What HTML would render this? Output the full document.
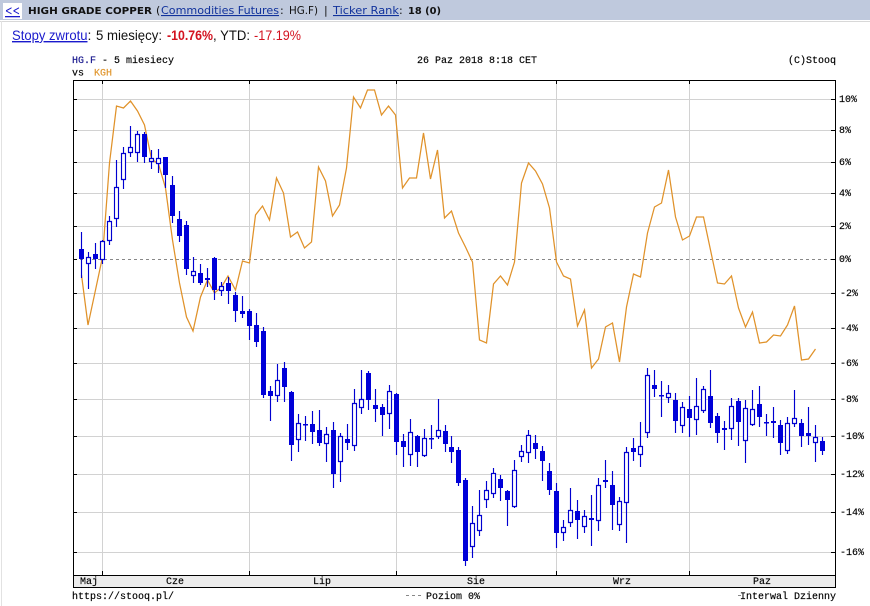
<!DOCTYPE html>
<html>
<head>
<meta charset="utf-8">
<title>HIGH GRADE COPPER</title>
<style>
html,body{margin:0;padding:0;background:#fff;width:870px;height:606px;overflow:hidden}
svg{display:block;position:absolute;left:0;top:0}
.m{font-family:"Liberation Mono",monospace;font-size:10px;fill:#000;stroke:#000;stroke-width:.15}
.v{font-family:"DejaVu Sans",sans-serif;font-size:11px;fill:#111}
.b{font-family:"DejaVu Sans",sans-serif;font-size:10px;font-weight:bold;fill:#111}
.a{font-family:"Liberation Sans",sans-serif;font-size:14px;fill:#111}
.l{fill:#11329c;text-decoration:underline}
</style>
</head>
<body>
<svg width="870" height="606" viewBox="0 0 870 606" xmlns="http://www.w3.org/2000/svg">
<rect x="0" y="0" width="870" height="20" fill="#bfc9dd"/>
<rect x="0" y="20" width="870" height="1" fill="#fff"/>
<rect x="0" y="21" width="870" height="1" fill="#d8d8d8"/>
<rect x="1" y="21" width="1" height="585" fill="#e2e2e2"/>
<rect x="3" y="3" width="19" height="16" fill="#fff"/>
<text x="5" y="15" class="v l" style="font-size:13px;fill:#1a1acc" textLength="15" lengthAdjust="spacingAndGlyphs">&lt;&lt;</text>
<text x="28" y="14" class="b" textLength="124" lengthAdjust="spacingAndGlyphs">HIGH GRADE COPPER</text>
<text x="156" y="14" class="v">(</text>
<text x="161" y="14" class="v l" textLength="118" lengthAdjust="spacingAndGlyphs">Commodities Futures</text>
<text x="280" y="14" class="v">:</text>
<text x="289" y="14" class="v" textLength="29" lengthAdjust="spacingAndGlyphs">HG.F)</text>
<text x="324" y="14" class="v">|</text>
<text x="333" y="14" class="v l" textLength="66" lengthAdjust="spacingAndGlyphs">Ticker Rank</text>
<text x="399" y="14" class="v">:</text>
<text x="408" y="14" class="b" textLength="33" lengthAdjust="spacingAndGlyphs">18 (0)</text>

<text x="12" y="40" class="a" style="fill:#1a1acc;text-decoration:underline" textLength="75.5" lengthAdjust="spacingAndGlyphs">Stopy zwrotu</text>
<text x="87.5" y="40" class="a">:</text>
<text x="96" y="40" class="a" textLength="66" lengthAdjust="spacingAndGlyphs">5 miesięcy:</text>
<text x="167" y="40" class="a" style="font-weight:bold;fill:#d3121f" textLength="46" lengthAdjust="spacingAndGlyphs">-10.76%</text>
<text x="213" y="40" class="a" textLength="37" lengthAdjust="spacingAndGlyphs">, YTD:</text>
<text x="254" y="40" class="a" style="fill:#d3121f" textLength="47" lengthAdjust="spacingAndGlyphs">-17.19%</text>

<text x="72" y="63" class="m" style="fill:#14148c;stroke:#14148c">HG.F</text>
<text x="102" y="63" class="m">- 5 miesiecy</text>
<text x="72" y="75.5" class="m">vs</text>
<text x="94" y="75.5" class="m" style="fill:#e0952c;stroke:#e0952c">KGH</text>
<text x="417" y="63" class="m">26 Paz 2018 8:18 CET</text>
<text x="788" y="63" class="m">(C)Stooq</text>

<rect x="74" y="576" width="761" height="11" fill="#ececec"/>
<path d="M74 99.5H835M74 130.5H835M74 162.5H835M74 193.5H835M74 226.5H835M74 293.5H835M74 328.5H835M74 363.5H835M74 399.5H835M74 436.5H835M74 474.5H835M74 512.5H835M74 552.5H835M102.5 81V575M249.5 81V575M396.5 81V575M556.5 81V575M689.5 81V575" fill="none" stroke="#d2d2d2" stroke-width="1"/>
<path d="M74 259.5H835" fill="none" stroke="#888" stroke-width="1" stroke-dasharray="3 3"/>

<polyline fill="none" stroke="#e0922a" stroke-width="1.25" points="81.5,275 88,325 95.5,290 102.5,257 109.5,163 116.5,106 123.5,108 130.5,101 137.5,111 144.5,125 151.5,159 158.5,164 165.5,188 172.5,240 179.5,283 186.5,317 193,331 200.5,297 207.5,280 214.5,293 221.5,287 228,276 235.5,290 242.5,261 249.5,263 255.5,215 262.5,206 269.5,220 276.5,178 283.5,193 290.5,237 297.5,232 304.5,248 311.5,242 318.5,167 325.5,181 332.5,216 339.5,205 346.5,168 353.5,97 360.5,108 367.5,90 374.5,90 381.5,115 388.5,106 395.5,115 402.5,188 409.5,178 416.5,178 423.5,133 430.5,179 437.5,150 444.5,218 451.5,211 458.5,233 465.5,247 472.5,262 479.5,340 486.5,343 493.5,284 500.5,276 507.5,285 514.5,262 521.5,183 528.5,163 535.5,171 542.5,184 549.5,208 556.5,262 563.5,276 570.5,279 577.5,326 584.5,310 591.5,368 598.5,359 605.5,327 612.5,323 619.5,362 626.5,307 633.5,274 640.5,277 647.5,233 654.5,207 661.5,203 668.5,170 675.5,217 682.5,240 689.5,236 696.5,217 703.5,217 710.5,250 717.5,283 724.5,284 731.5,276 738.5,308 745.5,327 752.5,312 759.5,343 766.5,342 773.5,335 780.5,336 787.5,325 794.5,306 801.5,360 808.5,359 815.5,349"/>

<path fill="none" stroke="#0000d0" stroke-width="1.15" d="M81.5 232V278M88.5 252V289M95.5 243V269M102.5 240V264M109.5 216V245M116.5 160V227M123.5 147V189M130.5 126V157M137.5 131V162M144.5 132V163M151.5 150V169M158.5 149V173M165.5 157V188M172.5 176V223M179.5 211V242M186.5 221V275M193.5 257V283M200.5 264V285M207.5 268V287M214.5 257V300M221.5 282V296M228.5 277V304M235.5 292V322M242.5 296V318M249.5 309V340M256.5 313V347M263.5 327V398M270.5 386V421M277.5 364V402M284.5 362V402M291.5 391V461M298.5 414V452M305.5 416V441M312.5 411V444M319.5 410V446M326.5 427V462M333.5 422V488M340.5 433V482M347.5 424V450M354.5 389V451M361.5 370V414M368.5 371V410M375.5 389V422M382.5 404V436M389.5 385V429M396.5 393V455M403.5 434V467M410.5 419V466M417.5 435V467M424.5 429V457M431.5 425V449M438.5 399V439M445.5 425V452M451.5 436V463M458.5 447V486M465.5 478V566M472.5 506V558M479.5 490V536M486.5 481V508M493.5 468V498M500.5 475V501M507.5 490V526M514.5 460V508M521.5 445V462M528.5 430V463M535.5 435V459M542.5 446V481M549.5 463V495M556.5 483V548M563.5 520V541M570.5 488V527M577.5 500V539M584.5 510V533M591.5 495V546M598.5 478V531M605.5 460V488M612.5 471V530M619.5 497V531M626.5 447V543M633.5 438V461M640.5 422V467M647.5 368V438M654.5 370V397M661.5 381V417M668.5 385V403M675.5 393V433M682.5 402V433M689.5 396V437M696.5 378V435M703.5 386V413M710.5 370V428M717.5 413V443M724.5 421V450M731.5 398V440M738.5 398V446M745.5 400V463M752.5 390V426M759.5 386V427M766.5 414V436M773.5 407V438M780.5 420V455M787.5 417V454M794.5 390V427M801.5 419V447M808.5 407V445M815.5 425V462M822.5 437V455"/>

<path fill="#fff" stroke="#0000d0" stroke-width="1.15" d="M86.5 257.5h4v6h-4zM100.5 241.5h4v18h-4zM107.5 221.5h4v19h-4zM114.5 187.5h4v31h-4zM121.5 153.5h4v26h-4zM128.5 147.5h4v5h-4zM135.5 134.5h4v18h-4zM149.5 158.5h4v3h-4zM156.5 158.5h4v5h-4zM191.5 271.5h4v4h-4zM219.5 286.5h4v4h-4zM275.5 380.5h4v15h-4zM296.5 423.5h4v16h-4zM324.5 434.5h4v9h-4zM338.5 436.5h4v25h-4zM352.5 403.5h4v42h-4zM359.5 399.5h4v8h-4zM387.5 391.5h4v22h-4zM408.5 432.5h4v22h-4zM422.5 438.5h4v17h-4zM436.5 430.5h4v6h-4zM470.5 523.5h4v23h-4zM477.5 515.5h4v15h-4zM484.5 490.5h4v9h-4zM491.5 473.5h4v20h-4zM512.5 470.5h4v36h-4zM519.5 451.5h4v5h-4zM526.5 435.5h4v17h-4zM561.5 527.5h4v5h-4zM568.5 510.5h4v12h-4zM582.5 516.5h4v10h-4zM596.5 485.5h4v35h-4zM617.5 501.5h4v23h-4zM624.5 452.5h4v50h-4zM638.5 446.5h4v8h-4zM645.5 375.5h4v57h-4zM666.5 393.5h4v4h-4zM680.5 407.5h4v18h-4zM694.5 406.5h4v13h-4zM701.5 389.5h4v21h-4zM729.5 406.5h4v22h-4zM743.5 408.5h4v32h-4zM750.5 409.5h4v15h-4zM785.5 423.5h4v27h-4zM792.5 418.5h4v5h-4zM813.5 437.5h4v5h-4z"/>

<path fill="#0000d8" d="M79 249h5v10h-5zM93 254h5v5h-5zM142 134h5v23h-5zM163 157h5v18h-5zM170 185h5v31h-5zM177 219h5v17h-5zM184 225h5v44h-5zM198 273h5v10h-5zM205 278h5v2h-5zM212 258h5v32h-5zM226 283h5v8h-5zM233 295h5v16h-5zM240 311h5v3h-5zM247 311h5v15h-5zM254 325h5v17h-5zM261 331h5v64h-5zM268 391h5v5h-5zM282 368h5v19h-5zM289 392h5v53h-5zM303 424h5v1.5h-5zM310 424h5v8h-5zM317 430h5v13h-5zM331 430h5v44h-5zM345 439h5v4h-5zM366 373h5v27h-5zM373 405h5v4h-5zM380 407h5v8h-5zM394 394h5v48h-5zM401 441h5v6h-5zM415 436h5v16h-5zM429 438h5v1.5h-5zM443 431h5v13h-5zM449 447h5v5h-5zM456 450h5v33h-5zM463 480h5v81h-5zM498 479h5v9h-5zM505 491h5v9h-5zM533 443h5v6h-5zM540 451h5v10h-5zM547 471h5v19h-5zM554 491h5v42h-5zM575 511h5v9h-5zM589 518h5v2h-5zM603 480h5v2h-5zM610 485h5v20h-5zM631 448h5v4h-5zM652 385h5v4h-5zM659 395h5v1.5h-5zM673 400h5v21h-5zM687 409h5v9h-5zM708 396h5v27h-5zM715 416h5v17h-5zM722 428h5v2h-5zM736 401h5v21h-5zM757 404h5v13h-5zM764 422h5v1.5h-5zM771 421h5v2h-5zM778 425h5v18h-5zM799 423h5v13h-5zM806 433h5v3h-5zM820 441h5v10h-5z"/>

<path fill="none" stroke="#000" stroke-width="1" d="M73.5 80.5H835.5V587.5H73.5ZM73.5 575.5H835.5"/>
<path fill="none" stroke="#000" stroke-width="1" d="M102.5 81V84M249.5 81V84M396.5 81V84M556.5 81V84M689.5 81V84M102.5 571V575M249.5 571V575M396.5 571V575M556.5 571V575M689.5 571V575M74 99.5H77M74 130.5H77M74 162.5H77M74 193.5H77M74 226.5H77M74 259.5H77M74 293.5H77M74 328.5H77M74 363.5H77M74 399.5H77M74 436.5H77M74 474.5H77M74 512.5H77M74 552.5H77M831 99.5H835M831 130.5H835M831 162.5H835M831 193.5H835M831 226.5H835M831 259.5H835M831 293.5H835M831 328.5H835M831 363.5H835M831 399.5H835M831 436.5H835M831 474.5H835M831 512.5H835M831 552.5H835"/>

<text x="839" y="102" class="m">10%</text>
<text x="839" y="133" class="m">8%</text>
<text x="839" y="165" class="m">6%</text>
<text x="839" y="196" class="m">4%</text>
<text x="839" y="229" class="m">2%</text>
<text x="839" y="262" class="m">0%</text>
<text x="840" y="296" class="m">-2%</text>
<text x="840" y="331" class="m">-4%</text>
<text x="840" y="366" class="m">-6%</text>
<text x="840" y="402" class="m">-8%</text>
<text x="840" y="439" class="m">-10%</text>
<text x="840" y="477" class="m">-12%</text>
<text x="840" y="515" class="m">-14%</text>
<text x="840" y="555" class="m">-16%</text>

<text x="80" y="584" class="m">Maj</text>
<text x="166" y="584" class="m">Cze</text>
<text x="313" y="584" class="m">Lip</text>
<text x="467" y="584" class="m">Sie</text>
<text x="613" y="584" class="m">Wrz</text>
<text x="753" y="584" class="m">Paz</text>

<text x="72" y="599" class="m">https://stooq.pl/</text>
<path d="M406 595.5H424" fill="none" stroke="#888" stroke-width="1" stroke-dasharray="3 3"/>
<text x="426" y="599" class="m">Poziom 0%</text>
<path d="M738 595.5H741" fill="none" stroke="#888" stroke-width="1"/>
<text x="740" y="599" class="m">Interwal Dzienny</text>
</svg>
</body>
</html>
